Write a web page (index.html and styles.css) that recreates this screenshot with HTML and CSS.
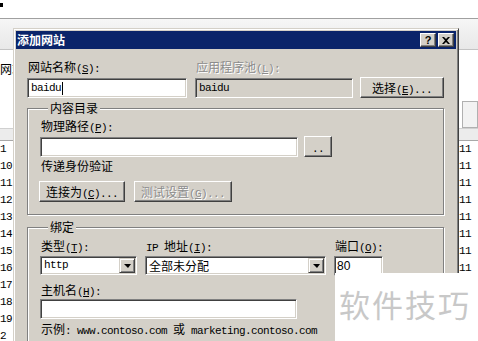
FILE: index.html
```html
<!DOCTYPE html>
<html lang="zh-CN">
<head>
  <meta charset="UTF-8" />
  <title>添加网站</title>
  <link rel="stylesheet" href="styles.css">
</head>
<body>
  <div class="screen">
    <div class="topbar"><span class="mark"></span></div>
    <div class="toolbar"></div>
    <div class="workspace">
      <div class="crumb">网站</div>
      <div class="panel"></div>
      <div class="list">
        <div class="list-head"></div>
        <div class="row"><span>1</span><span>11</span></div>
        <div class="row"><span>10</span><span>11</span></div>
        <div class="row"><span>11</span><span>11</span></div>
        <div class="row"><span>12</span><span>11</span></div>
        <div class="row"><span>13</span><span>11</span></div>
        <div class="row"><span>14</span><span>11</span></div>
        <div class="row"><span>15</span><span>11</span></div>
        <div class="row"><span>16</span><span>11</span></div>
        <div class="row"><span>17</span></div>
        <div class="row"><span>18</span></div>
        <div class="row"><span>19</span></div>
        <div class="row"><span>2</span></div>
      </div>
    </div>

    <div class="dialog">
      <div class="titlebar">
        <span class="title">添加网站</span>
        <span class="caption-btns">
          <span class="cbtn">?</span>
          <span class="cbtn">
            <svg width="8" height="7" viewBox="0 0 8 7"><path d="M0 0h2l2 2 2-2h2L5 3.5 8 7H6L4 5 2 7H0l3-3.5z" fill="#000"/></svg>
          </span>
        </span>
      </div>

      <div class="dlg-body">
        <div class="site-row">
          <div class="field w160">
            <label>网站名称<span class="en">(<u>S</u>):</span></label>
            <div class="edit"><span class="en">baidu</span><span class="caret"></span></div>
          </div>
          <div class="field w158">
            <label class="disabled">应用程序池<span class="en">(<u>L</u>):</span></label>
            <div class="edit readonly"><span class="en">baidu</span></div>
          </div>
          <button class="btn w84">选择<span class="en">(<u>E</u>)...</span></button>
        </div>

        <fieldset class="group">
          <legend>内容目录</legend>
          <label class="first">物理路径<span class="en">(<u>P</u>):</span></label>
          <div class="path-row">
            <div class="edit w258"></div>
            <button class="btn dots"><span class="en">..</span></button>
          </div>
          <div class="note">传递身份验证</div>
          <div class="btn-row">
            <button class="btn w86">连接为<span class="en">(<u>C</u>)...</span></button>
            <button class="btn w98" disabled>测试设置<span class="en">(<u>G</u>)...</span></button>
          </div>
        </fieldset>

        <fieldset class="group binding">
          <legend>绑定</legend>
          <div class="bind-row">
            <div class="field w97">
              <label>类型<span class="en">(<u>T</u>):</span></label>
              <div class="combo"><span class="combo-text en">http</span><span class="drop"><i></i></span></div>
            </div>
            <div class="field w181">
              <label><span class="en">IP </span>地址<span class="en">(<u>I</u>):</span></label>
              <div class="combo"><span class="combo-text">全部未分配</span><span class="drop"><i></i></span></div>
            </div>
            <div class="field w49">
              <label>端口<span class="en">(<u>O</u>):</span></label>
              <div class="edit port">80</div>
            </div>
          </div>
          <label class="host">主机名<span class="en">(<u>H</u>):</span></label>
          <div class="edit w257"></div>
          <div class="example">示例<span class="en">: www.contoso.com </span>或<span class="en"> marketing.contoso.com</span></div>
        </fieldset>
      </div>
    </div>

    <div class="watermark">软件技巧</div>
  </div>
</body>
</html>
```

FILE: styles.css
```css
* {
  box-sizing: border-box;
}

body {
  margin: 0;
  width: 478px;
  height: 341px;
  overflow: hidden;
  background: #fff;
  color: #000;
  font-family: "Noto Sans CJK SC", sans-serif;
  font-size: 12px;
}

.screen {
  position: relative;
  height: 341px;
}

/* background window */
.topbar {
  height: 16px;
  border-bottom: 1px solid #a0a0a0;
}

.mark {
  display: block;
  width: 3px;
  height: 4px;
  margin-top: 3px;
  background: #000;
}

.toolbar {
  height: 31px;
  background: linear-gradient(#f6f6f6, #e8e8e8);
  border-bottom: 1px solid #c4c4c4;
}

.crumb {
  margin-top: 12px;
  line-height: 14px;
}

.panel {
  height: 27px;
  margin: 25px 0 0 462px;
  border: 1px solid #b0b0b0;
  background: #f2f2f2;
}

.list-head {
  height: 13px;
  background: #ececec;
  border-top: 1px solid #d0d0d0;
  border-bottom: 1px solid #a8a8a8;
}

.row {
  display: grid;
  grid-template-columns: 459px 1fr;
  height: 17px;
  line-height: 17px;
  font-family: "Liberation Mono", monospace;
  font-size: 11px;
  letter-spacing: -0.6px;
}

/* dialog */
.dialog {
  position: absolute;
  left: 13px;
  top: 25px;
  width: 446px;
  height: 330px;
  padding: 2px;
  background: #d4d0c8;
  border: 1px solid;
  border-color: #d4d0c8 #404040 #404040 #d4d0c8;
  box-shadow: inset 1px 1px #fff, inset -1px -1px #808080;
  overflow: hidden;
}

.titlebar {
  display: flex;
  align-items: center;
  height: 18px;
  padding: 0 2px 0 1px;
  background: #0a246a;
}

.title {
  color: #fff;
  font-weight: bold;
  font-size: 12px;
  line-height: 18px;
}

.caption-btns {
  display: flex;
  gap: 2px;
  margin-left: auto;
}

.cbtn {
  display: flex;
  align-items: center;
  justify-content: center;
  width: 16px;
  height: 14px;
  background: #d4d0c8;
  border: 1px solid;
  border-color: #fff #404040 #404040 #fff;
  box-shadow: inset -1px -1px #808080;
  font-family: "Liberation Sans", sans-serif;
  font-weight: bold;
  font-size: 11px;
  line-height: 12px;
}

.dlg-body {
  padding: 11px 12px 0 11px;
}

.en {
  font-family: "Liberation Mono", monospace;
  font-size: 11px;
  letter-spacing: -0.6px;
}

label {
  display: block;
  line-height: 14px;
  padding-left: 1px;
  white-space: nowrap;
}

.disabled {
  color: #8c8c8c;
  text-shadow: 1px 1px 0 #fff;
}

.site-row {
  display: flex;
  align-items: flex-end;
}

.field label {
  margin-bottom: 2px;
}

.w160 { width: 160px; margin-right: 8px; }
.w158 { width: 158px; margin-right: 7px; }
.w84 { width: 84px; }
.w258 { width: 258px; }
.w257 { width: 257px; }
.w86 { width: 86px; }
.w98 { width: 98px; }
.w97 { width: 97px; }
.w181 { width: 181px; }
.w49 { width: 49px; }

.edit {
  display: flex;
  align-items: center;
  height: 20px;
  padding: 0 3px;
  background: #fff;
  border: 1px solid;
  border-color: #808080 #fff #fff #808080;
  box-shadow: inset 1px 1px #404040, inset -1px -1px #d4d0c8;
}

.edit.readonly {
  background: #d4d0c8;
}

.caret {
  width: 1px;
  height: 13px;
  margin-left: 1px;
  background: #000;
}

.btn {
  height: 21px;
  padding: 0;
  background: #d4d0c8;
  border: 1px solid;
  border-color: #fff #404040 #404040 #fff;
  box-shadow: inset -1px -1px #808080;
  font-family: inherit;
  font-size: 12px;
  color: #000;
}

.btn:disabled {
  color: #8c8c8c;
  text-shadow: 1px 1px 0 #fff;
}

.group {
  margin: 3px 0 0;
  padding: 0 0 12px 12px;
  min-width: 0;
  border: 1px solid #808080;
  box-shadow: inset 1px 1px #fff, 1px 1px #fff;
}

.group legend {
  margin-left: 8px;
  padding: 0 2px;
  line-height: 14px;
  background: #d4d0c8;
}

.group label.first {
  margin-top: 4px;
}

.path-row {
  display: flex;
  align-items: flex-end;
  gap: 6px;
  margin-top: 1px;
}

.dots {
  width: 28px;
}

.note {
  margin-top: 2px;
  padding-left: 1px;
  line-height: 14px;
}

.btn-row {
  display: flex;
  gap: 9px;
  margin-top: 8px;
  margin-left: -1px;
}

.binding {
  margin-top: 5px;
  padding-bottom: 40px;
}

.bind-row {
  display: flex;
  gap: 8px;
  margin-top: 5px;
}

.bind-row .field label {
  margin-bottom: 1px;
}

.combo {
  display: flex;
  height: 19px;
  padding: 1px;
  background: #fff;
  border: 1px solid;
  border-color: #808080 #fff #fff #808080;
  box-shadow: inset 1px 1px #404040, inset -1px -1px #d4d0c8;
}

.combo-text {
  flex: 1;
  padding-left: 2px;
  line-height: 15px;
  white-space: nowrap;
}

.drop {
  display: flex;
  align-items: center;
  justify-content: center;
  width: 16px;
  background: #d4d0c8;
  border: 1px solid;
  border-color: #d4d0c8 #404040 #404040 #d4d0c8;
  box-shadow: inset 1px 1px #fff, inset -1px -1px #808080;
}

.drop i {
  width: 0;
  height: 0;
  border-top: 4px solid #000;
  border-left: 4px solid transparent;
  border-right: 3px solid transparent;
}

.port {
  font-family: "Liberation Sans", sans-serif;
  font-size: 12px;
  padding-left: 2px;
}

.host {
  margin-top: 7px;
  margin-bottom: 0;
}

.example {
  margin-top: 3px;
  padding-left: 1px;
  line-height: 14px;
  white-space: nowrap;
}

/* site watermark */
.watermark {
  position: absolute;
  left: 335px;
  top: 270px;
  width: 143px;
  height: 71px;
  padding: 15px 0 0 4px;
  background: #fff;
  color: #c8c8c8;
  font-size: 31px;
  line-height: 31px;
  letter-spacing: 2px;
  white-space: nowrap;
}
```
